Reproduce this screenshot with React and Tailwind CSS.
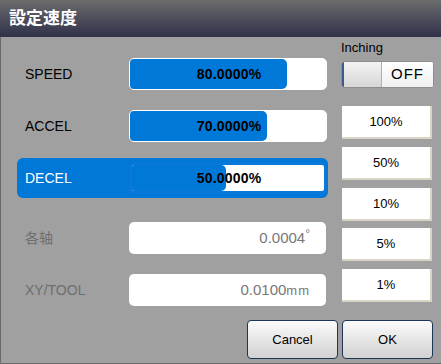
import React from "react";

const font = { fontFamily: '"Liberation Sans", "Noto Sans CJK JP", sans-serif' };

function Bar({ value, pct, active }) {
  return (
    <div
      className={
        "relative w-[198px] h-[32px] rounded-[5px] bg-white overflow-hidden " +
        (active ? "border-[3px] border-[#0a78d8]" : "border border-white")
      }
    >
      <div
        className="absolute left-0 top-0 bottom-0 bg-[#0078d7] rounded-r-[5px]"
        style={{ width: pct }}
      />
      <div className="relative h-full flex items-center justify-center pl-[2px] text-[14px] font-bold text-black tracking-[0.2px]">
        {value}
      </div>
    </div>
  );
}

function ReadBox({ value }) {
  return (
    <div className="w-[197px] h-[32px] rounded-[5px] bg-white flex items-center justify-end pr-[16px] text-[15px] text-[#777777]">
      {value}
    </div>
  );
}

function Row({ label, children, active, disabled, className = "" }) {
  return (
    <div
      className={
        "h-[40px] w-[311px] flex items-center pl-[8px] rounded-[6px] " +
        (active ? "bg-[#0078d7] " : "") +
        className
      }
    >
      <div
        className={
          "w-[104px] text-[14px] " +
          (active ? "text-white" : disabled ? "text-[#6e6e6e]" : "text-black")
        }
      >
        {label}
      </div>
      {children}
    </div>
  );
}

function PctButton({ label, className = "" }) {
  return (
    <div
      className={
        "w-[90px] h-[33px] bg-white border-r-2 border-b-2 border-[#d8d4c6] flex items-center justify-center text-[13px] text-black " +
        className
      }
    >
      {label}
    </div>
  );
}

function DlgButton({ label }) {
  return (
    <div className="w-[91px] h-[39px] rounded-[4px] border border-[#1d3557] bg-gradient-to-b from-[#fbfbfb] to-[#d2d2d2] flex items-center justify-center text-[13px] text-black">
      {label}
    </div>
  );
}

export default function App() {
  return (
    <div className="w-[441px] h-[364px] flex flex-col overflow-hidden" style={font}>
      <div className="h-[37px] shrink-0 bg-gradient-to-b from-[#6c6c6c] to-[#31314a] flex items-center pl-[9px] text-white text-[17px] font-bold">
        設定速度
      </div>
      <div className="flex-1 bg-[#a0a0a0] border-l border-b border-[#6a6a6a] flex flex-col">
        <div className="flex">
          <div className="w-[340px] pl-[16px] pt-[17px] flex flex-col">
            <Row label="SPEED">
              <Bar value="80.0000%" pct="80%" />
            </Row>
            <Row label="ACCEL" className="mt-[12px]">
              <Bar value="70.0000%" pct="70%" />
            </Row>
            <Row label="DECEL" active className="mt-[12px]">
              <Bar value="50.0000%" pct="49%" active />
            </Row>
            <Row label="各轴" disabled className="mt-[20px]">
              <ReadBox
                value={
                  <span>
                    0.0004<span className="relative -top-[5px] text-[12px]">°</span>
                  </span>
                }
              />
            </Row>
            <Row label="XY/TOOL" disabled className="mt-[12px]">
              <ReadBox value={<span>0.0100<span className="text-[13px] tracking-[1px]">mm</span></span>} />
            </Row>
          </div>
          <div className="flex flex-col pt-[2px]">
            <div className="text-[13px] text-black h-[18px] leading-[18px]">Inching</div>
            <div className="mt-[4px] w-[93px] h-[27px] rounded-[3px] border border-[#8e8e8e] bg-white flex overflow-hidden">
              <div className="w-[40px] h-full bg-gradient-to-b from-[#f4f4f4] to-[#d6d6d6] border-l-2 border-[#3a5a8a] border-r border-r-[#b0b0b0]" />
              <div className="flex-1 flex items-center justify-center text-[15px] text-black tracking-[1px] bg-gradient-to-b from-white to-[#f0f0f0]">
                OFF
              </div>
            </div>
            <PctButton label="100%" className="mt-[18px] ml-[1px]" />
            <PctButton label="50%" className="mt-[8px] ml-[1px]" />
            <PctButton label="10%" className="mt-[8px] ml-[1px]" />
            <PctButton label="5%" className="mt-[7px] ml-[1px]" />
            <PctButton label="1%" className="mt-[8px] ml-[1px]" />
          </div>
        </div>
        <div className="mt-auto pb-[4px] flex justify-end gap-[4px] pr-[8px]">
          <DlgButton label="Cancel" />
          <DlgButton label="OK" />
        </div>
      </div>
    </div>
  );
}
